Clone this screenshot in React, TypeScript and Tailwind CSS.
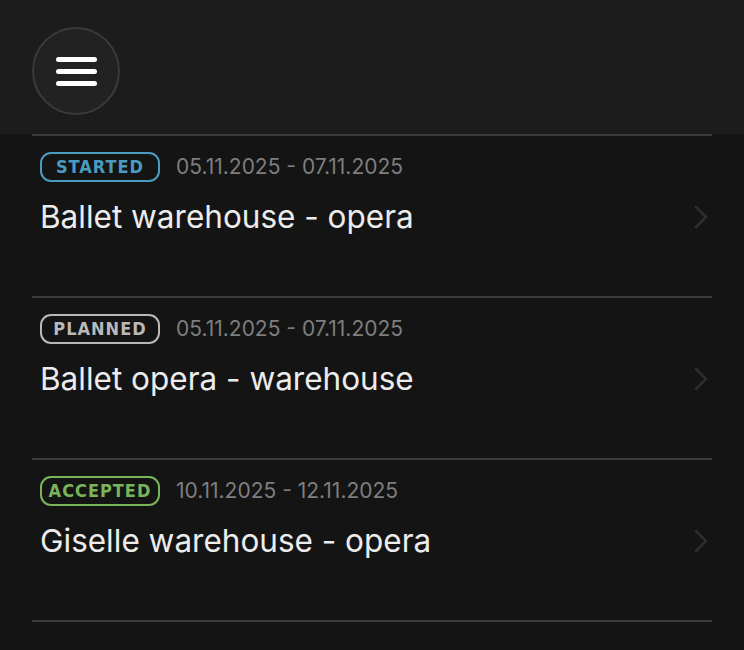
const trips = [
  { status: "STARTED", tone: "border-[#4a9bbf] text-[#4a9bbf]", dates: "05.11.2025 - 07.11.2025", title: "Ballet warehouse - opera" },
  { status: "PLANNED", tone: "border-[#b9b9b9] text-[#b9b9b9]", dates: "05.11.2025 - 07.11.2025", title: "Ballet opera - warehouse" },
  { status: "ACCEPTED", tone: "border-[#79b35a] text-[#79b35a]", dates: "10.11.2025 - 12.11.2025", title: "Giselle warehouse - opera" },
];

function Chevron() {
  return (
    <svg width="14" height="24" viewBox="0 0 14 24" fill="none" className="text-[#2f2f2f]">
      <path d="M2 2l10 10-10 10" stroke="currentColor" strokeWidth="2.5" strokeLinecap="round" strokeLinejoin="round" />
    </svg>
  );
}

export default function App() {
  return (
    <div className="flex h-[650px] w-[744px] flex-col overflow-hidden bg-[#141414] font-['Inter',sans-serif]">
      <header className="flex h-[134px] shrink-0 items-start bg-[#1c1c1c] pl-8 pt-[27px]">
        <button className="flex h-[88px] w-[88px] flex-col items-center justify-center gap-[7px] rounded-full border-2 border-[#3a3a3a] bg-[#222222]">
          <span className="h-[5px] w-[41px] rounded-full bg-white" />
          <span className="h-[5px] w-[41px] rounded-full bg-white" />
          <span className="h-[5px] w-[41px] rounded-full bg-white" />
        </button>
      </header>
      <ul className="flex flex-col px-8">
        {trips.map((t) => (
          <li key={t.title} className="flex h-[162px] items-start border-t-2 border-[#3b3b3b] pt-[15px]">
            <div className="flex flex-1 flex-col">
              <div className="flex items-center gap-4 pl-2">
                <span className={`flex h-[30px] w-[120px] items-center justify-center rounded-[11px] border-2 font-['DejaVu_Sans_Condensed','Inter',sans-serif] text-[18px] font-bold tracking-[1px] ${t.tone}`}>
                  {t.status}
                </span>
                <span className="text-[21px] text-[#7e7e7e]">{t.dates}</span>
              </div>
              <p className="mt-[10px] pl-2 text-[31.5px] text-[#ececec]">{t.title}</p>
            </div>
            <div className="mt-[54px] pr-1">
              <Chevron />
            </div>
          </li>
        ))}
        <li className="border-t-2 border-[#3b3b3b]" />
      </ul>
    </div>
  );
}
